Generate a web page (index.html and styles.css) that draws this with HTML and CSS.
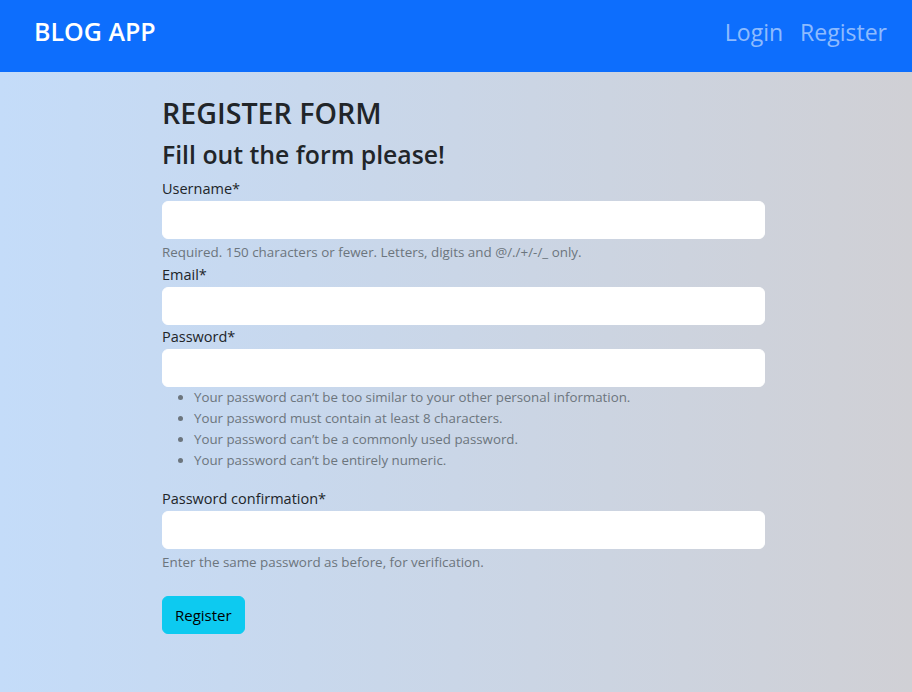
FILE: index.html
```html
<!DOCTYPE html>
<html lang="en">
<head>
<meta charset="utf-8">
<title>Blog App - Register</title>
<link rel="stylesheet" href="styles.css">
</head>
<body>
<nav class="navbar">
  <a class="brand" href="#">BLOG APP</a>
  <div class="nav-links">
    <a class="nav-link" href="#">Login</a>
    <a class="nav-link" href="#">Register</a>
  </div>
</nav>
<main class="content">
  <h3 class="title">REGISTER FORM</h3>
  <h4 class="subtitle">Fill out the form please!</h4>
  <form class="form">
    <div class="field">
      <label class="label" for="u">Username*</label>
      <input class="input" id="u" type="text">
      <div class="help">Required. 150 characters or fewer. Letters, digits and @/./+/-/_ only.</div>
    </div>
    <div class="field">
      <label class="label" for="e">Email*</label>
      <input class="input" id="e" type="email">
    </div>
    <div class="field">
      <label class="label" for="p1">Password*</label>
      <input class="input" id="p1" type="password">
      <ul class="help-list">
        <li>Your password can’t be too similar to your other personal information.</li>
        <li>Your password must contain at least 8 characters.</li>
        <li>Your password can’t be a commonly used password.</li>
        <li>Your password can’t be entirely numeric.</li>
      </ul>
    </div>
    <div class="field">
      <label class="label" for="p2">Password confirmation*</label>
      <input class="input" id="p2" type="password">
      <div class="help">Enter the same password as before, for verification.</div>
    </div>
    <button class="btn" type="button">Register</button>
  </form>
</main>
</body>
</html>
```
FILE: styles.css
```css
* { box-sizing: border-box; }
html, body { margin: 0; padding: 0; }
body {
  font-family: "Open Sans", "Noto Sans", sans-serif;
  font-size: 16px;
  line-height: 1.5;
  color: #212529;
  min-height: 692px;
  background: linear-gradient(to right, #c4dcf9, #d0d0d5);
}
.navbar {
  height: 72px;
  background: #0d6efd;
  display: flex;
  align-items: center;
  justify-content: space-between;
  padding: 0 25px 8px 34px;
}
.brand {
  color: #fff;
  text-decoration: none;
  font-size: 25px;
  font-weight: 600;
}
.nav-links { display: flex; gap: 17px; }
.nav-link {
  color: rgba(255, 255, 255, 0.55);
  text-decoration: none;
  font-size: 23px;
}
.content {
  width: 603px;
  margin-left: 162px;
  padding-top: 24px;
}
.title {
  margin: 0 0 10px;
  font-size: 28.6px;
  font-weight: 600;
  line-height: 1.2;
}
.subtitle {
  margin: 0 0 7px;
  font-size: 24.8px;
  font-weight: 600;
  line-height: 1.2;
}
.form { display: flex; flex-direction: column; }
.label { display: block; font-size: 14.5px; line-height: 24px; }
.input {
  display: block;
  width: 100%;
  height: 38px;
  border: 1px solid #fff;
  border-radius: 6px;
  background: #fff;
  font: inherit;
}
.help {
  margin-top: 3px;
  font-size: 13.4px;
  line-height: 21px;
  color: #6c757d;
}
.help-list {
  margin: 0 0 16px;
  padding-left: 32px;
  font-size: 13.3px;
  line-height: 21px;
  color: #6c757d;
}
.btn {
  align-self: flex-start;
  margin-top: 23px;
  height: 38px;
  padding: 0 12px;
  background: #0dcaf0;
  border: 1px solid #0dcaf0;
  border-radius: 6px;
  font: inherit;
  font-size: 15px;
  color: #000;
}
```
